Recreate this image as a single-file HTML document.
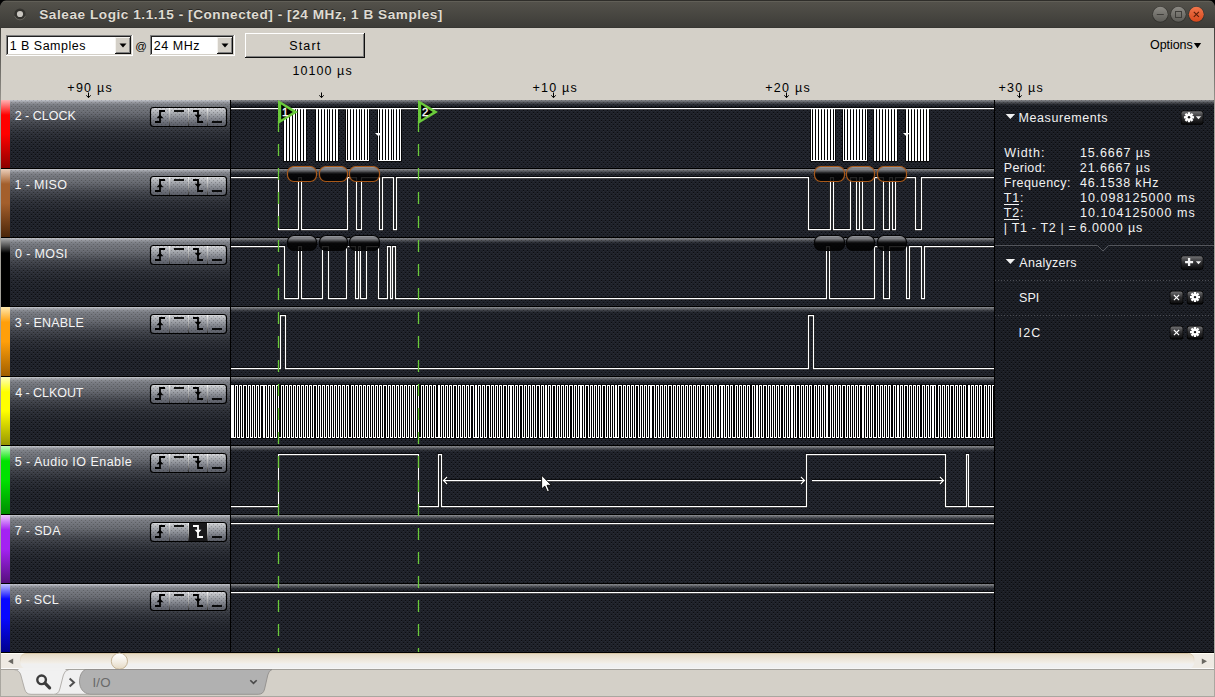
<!DOCTYPE html>
<html><head><meta charset="utf-8"><title>Saleae Logic</title>
<style>html,body{margin:0;padding:0;background:#d4d0c8;overflow:hidden}svg{display:block;font-family:"Liberation Sans", sans-serif;}text{white-space:pre}</style></head><body>
<svg width="1215" height="697" viewBox="0 0 1215 697">
<defs>
<pattern id="dots" width="4" height="4" patternUnits="userSpaceOnUse"><rect x="1" y="0" width="1" height="1" fill="#000" fill-opacity="0.566"/><rect x="3" y="2" width="1" height="1" fill="#000" fill-opacity="0.566"/><rect x="1" y="1" width="1" height="1" fill="#fff" fill-opacity="0.05"/><rect x="3" y="3" width="1" height="1" fill="#fff" fill-opacity="0.05"/></pattern>
<pattern id="dots2" width="4" height="4" patternUnits="userSpaceOnUse"><rect x="1" y="0" width="1" height="1" fill="#000" fill-opacity="0.108"/><rect x="3" y="2" width="1" height="1" fill="#000" fill-opacity="0.108"/></pattern>
<pattern id="dots3" width="4" height="4" patternUnits="userSpaceOnUse"><rect x="1" y="0" width="1" height="1" fill="#000" fill-opacity="0.22"/><rect x="3" y="2" width="1" height="1" fill="#000" fill-opacity="0.22"/></pattern>
<linearGradient id="gTitle" x1="0" y1="0" x2="0" y2="1"><stop offset="0" stop-color="#55534c"/><stop offset="1" stop-color="#3c3b37"/></linearGradient>
<linearGradient id="gLab" x1="0" y1="0" x2="0" y2="1"><stop offset="0" stop-color="#f7f9ff" stop-opacity="0.78"/><stop offset="0.0147" stop-color="#f7f9ff" stop-opacity="0.67"/><stop offset="0.0294" stop-color="#f7f9ff" stop-opacity="0.576"/><stop offset="0.0588" stop-color="#f7f9ff" stop-opacity="0.455"/><stop offset="0.088" stop-color="#f7f9ff" stop-opacity="0.406"/><stop offset="0.191" stop-color="#f7f9ff" stop-opacity="0.34"/><stop offset="0.338" stop-color="#f7f9ff" stop-opacity="0.17"/><stop offset="0.485" stop-color="#f7f9ff" stop-opacity="0.067"/><stop offset="0.632" stop-color="#f7f9ff" stop-opacity="0.018"/><stop offset="0.78" stop-color="#f7f9ff" stop-opacity="0"/></linearGradient>
<linearGradient id="gRidge" x1="0" y1="0" x2="0" y2="1"><stop offset="0.0000" stop-color="#fff" stop-opacity="0.48"/><stop offset="0.1667" stop-color="#fff" stop-opacity="0.39"/><stop offset="0.3333" stop-color="#fff" stop-opacity="0.27"/><stop offset="0.5000" stop-color="#fff" stop-opacity="0.17"/><stop offset="0.6667" stop-color="#fff" stop-opacity="0.09"/><stop offset="0.8333" stop-color="#fff" stop-opacity="0.036"/><stop offset="1.0000" stop-color="#fff" stop-opacity="0"/></linearGradient>
<linearGradient id="gBar0" x1="0" y1="0" x2="0" y2="1"><stop offset="0" stop-color="#ffb4b4"/><stop offset="0.22" stop-color="#ff0000"/><stop offset="0.5" stop-color="#ff0000"/><stop offset="1" stop-color="#8c0000"/></linearGradient>
<linearGradient id="gBar1" x1="0" y1="0" x2="0" y2="1"><stop offset="0" stop-color="#ecd0bc"/><stop offset="0.22" stop-color="#a45f2c"/><stop offset="0.5" stop-color="#a45f2c"/><stop offset="1" stop-color="#4a2508"/></linearGradient>
<linearGradient id="gBar2" x1="0" y1="0" x2="0" y2="1"><stop offset="0" stop-color="#b0b0b0"/><stop offset="0.22" stop-color="#000000"/><stop offset="0.5" stop-color="#000000"/><stop offset="1" stop-color="#000000"/></linearGradient>
<linearGradient id="gBar3" x1="0" y1="0" x2="0" y2="1"><stop offset="0" stop-color="#ffe9b0"/><stop offset="0.22" stop-color="#ff9f0a"/><stop offset="0.5" stop-color="#ff9f0a"/><stop offset="1" stop-color="#a05e00"/></linearGradient>
<linearGradient id="gBar4" x1="0" y1="0" x2="0" y2="1"><stop offset="0" stop-color="#ffffc0"/><stop offset="0.22" stop-color="#ffff00"/><stop offset="0.5" stop-color="#ffff00"/><stop offset="1" stop-color="#969600"/></linearGradient>
<linearGradient id="gBar5" x1="0" y1="0" x2="0" y2="1"><stop offset="0" stop-color="#c4ffc4"/><stop offset="0.22" stop-color="#00e200"/><stop offset="0.5" stop-color="#00e200"/><stop offset="1" stop-color="#008c00"/></linearGradient>
<linearGradient id="gBar6" x1="0" y1="0" x2="0" y2="1"><stop offset="0" stop-color="#f0c8ff"/><stop offset="0.22" stop-color="#a422f2"/><stop offset="0.5" stop-color="#a422f2"/><stop offset="1" stop-color="#55107c"/></linearGradient>
<linearGradient id="gBar7" x1="0" y1="0" x2="0" y2="1"><stop offset="0" stop-color="#c4c4ff"/><stop offset="0.22" stop-color="#0808ff"/><stop offset="0.5" stop-color="#0808ff"/><stop offset="1" stop-color="#00008c"/></linearGradient>
<linearGradient id="gBtn" x1="0" y1="0" x2="0" y2="1"><stop offset="0" stop-color="#dfe0e3"/><stop offset="0.12" stop-color="#c2c4c8"/><stop offset="0.35" stop-color="#a1a4aa"/><stop offset="0.6" stop-color="#81848c"/><stop offset="0.82" stop-color="#676a73"/><stop offset="1" stop-color="#5a5d66"/></linearGradient>
<linearGradient id="gDiv" x1="0" y1="0" x2="0" y2="1"><stop offset="0" stop-color="#ffffff"/><stop offset="0.15" stop-color="#d8d8d8"/><stop offset="0.6" stop-color="#9a9a9a"/><stop offset="1" stop-color="#2a2a2a"/></linearGradient>
<linearGradient id="gPill" x1="0" y1="0" x2="0" y2="1"><stop offset="0" stop-color="#a9abb0"/><stop offset="0.08" stop-color="#a2a4a9"/><stop offset="0.2" stop-color="#7f8084"/><stop offset="0.33" stop-color="#505153"/><stop offset="0.43" stop-color="#1b1b1c"/><stop offset="0.52" stop-color="#030303"/><stop offset="1" stop-color="#000"/></linearGradient>
<linearGradient id="gDark" x1="0" y1="0" x2="0" y2="1"><stop offset="0" stop-color="#727274"/><stop offset="0.45" stop-color="#333335"/><stop offset="1" stop-color="#0a0a0b"/></linearGradient>
<linearGradient id="gScroll" x1="0" y1="0" x2="0" y2="1"><stop offset="0" stop-color="#e4d8c2"/><stop offset="0.3" stop-color="#ebe3d5"/><stop offset="0.62" stop-color="#f2eee7"/><stop offset="0.7" stop-color="#f0f0f0"/><stop offset="1" stop-color="#f0f0f0"/></linearGradient>
<linearGradient id="gTrackS" x1="0" y1="0" x2="0" y2="1"><stop offset="0" stop-color="#d6c5a4"/><stop offset="0.45" stop-color="#e6dccb" stop-opacity="0.6"/><stop offset="0.7" stop-color="#f0f0f0" stop-opacity="0"/><stop offset="1" stop-color="#f0f0f0" stop-opacity="0"/></linearGradient>
<linearGradient id="gThumb" x1="0" y1="0" x2="0" y2="1"><stop offset="0" stop-color="#ffffff"/><stop offset="0.5" stop-color="#f4efe6"/><stop offset="1" stop-color="#e4d8c2"/></linearGradient>
<linearGradient id="gGray" x1="0" y1="0" x2="0" y2="1"><stop offset="0" stop-color="#8c8a84"/><stop offset="1" stop-color="#5d5c57"/></linearGradient>
<linearGradient id="gOrange" x1="0" y1="0" x2="0" y2="1"><stop offset="0" stop-color="#f0764c"/><stop offset="1" stop-color="#d8481c"/></linearGradient>
<linearGradient id="gEdge" x1="0" y1="28" x2="0" y2="697" gradientUnits="userSpaceOnUse"><stop offset="0" stop-color="#3f3e3a"/><stop offset="0.06" stop-color="#6e6c67"/><stop offset="0.12" stop-color="#a19e97"/><stop offset="1" stop-color="#aaa7a0"/></linearGradient>
<clipPath id="clipWave"><rect x="231" y="100" width="763" height="552"/></clipPath>
</defs>
<rect x="0" y="0" width="1215" height="697" fill="#d4d0c8" />
<rect x="0" y="0" width="1215" height="28" fill="url(#gTitle)" />
<rect x="0" y="0" width="1215" height="1" fill="#2f2e2a" />
<rect x="0" y="1" width="1215" height="1" fill="#615f57" />
<rect x="0" y="27" width="1215" height="1" fill="#383733" />
<path d="M0 0H6Q1.5 1 0 6Z" fill="#000"/>
<path d="M1215 0H1209Q1213.5 1 1215 6Z" fill="#000"/>
<circle cx="20" cy="14" r="5.6" fill="#33322e"/>
<path d="M14.6 16.2A5.8 5.8 0 0 0 25.4 16.2" fill="none" stroke="#6b6962" stroke-width="0.9"/>
<circle cx="20" cy="14" r="3.1" fill="#c9c6c0"/>
<text x="39.23" y="18" font-size="13.6" fill="#2a2926" textLength="403.16" lengthAdjust="spacing" font-weight="bold" >Saleae Logic 1.1.15 - [Connected] - [24 MHz, 1 B Samples]</text>
<text x="39.23" y="19" font-size="13.6" fill="#dfdbd2" textLength="403.16" lengthAdjust="spacing" font-weight="bold" >Saleae Logic 1.1.15 - [Connected] - [24 MHz, 1 B Samples]</text>
<circle cx="1160.3" cy="14.6" r="8.1" fill="#33322e"/>
<circle cx="1160.3" cy="14.3" r="7.45" fill="url(#gGray)"/>
<circle cx="1178.3" cy="14.6" r="8.1" fill="#33322e"/>
<circle cx="1178.3" cy="14.3" r="7.45" fill="url(#gGray)"/>
<circle cx="1196.3" cy="14.6" r="8.1" fill="#33322e"/>
<circle cx="1196.3" cy="14.3" r="7.45" fill="url(#gOrange)"/>
<path d="M1156.8 14.5H1163.8" stroke="#3f3e3a" stroke-width="1"/>
<rect x="1175.5" y="11.5" width="6" height="6" fill="none" stroke="#3f3e3a" stroke-width="1"/>
<path d="M1193.8 11.8L1198.9 16.9M1198.9 11.8L1193.8 16.9" stroke="#5a1d08" stroke-width="1.1"/>
<rect x="0" y="28" width="1" height="669" fill="url(#gEdge)" />
<rect x="1214" y="28" width="1" height="669" fill="url(#gEdge)" />
<rect x="0" y="696" width="1215" height="1" fill="#aaa7a0" />
<rect x="6" y="35" width="127" height="21" fill="#ffffff" />
<rect x="6" y="35" width="126" height="1" fill="#808080" />
<rect x="6" y="35" width="1" height="20" fill="#808080" />
<rect x="7" y="36" width="125" height="19" fill="#d4d0c8" />
<rect x="7" y="36" width="124" height="1" fill="#202020" />
<rect x="7" y="36" width="1" height="18" fill="#202020" />
<rect x="8" y="37" width="123" height="17" fill="#ffffff" />
<rect x="115" y="37" width="16" height="17" fill="#101010" />
<rect x="115" y="37" width="15" height="16" fill="#f4f2ee" />
<rect x="116" y="38" width="14" height="15" fill="#808080" />
<rect x="116" y="38" width="13" height="14" fill="#d4d0c8" />
<path d="M119.5 43.4H126.5L123.0 47.4Z" fill="#000"/>
<text x="9.63" y="50" font-size="12.5" fill="#000" textLength="75.76" lengthAdjust="spacing" >1 B Samples</text>
<text x="135.20" y="49.6" font-size="11.4" fill="#000" >@</text>
<rect x="150" y="35" width="85" height="21" fill="#ffffff" />
<rect x="150" y="35" width="84" height="1" fill="#808080" />
<rect x="150" y="35" width="1" height="20" fill="#808080" />
<rect x="151" y="36" width="83" height="19" fill="#d4d0c8" />
<rect x="151" y="36" width="82" height="1" fill="#202020" />
<rect x="151" y="36" width="1" height="18" fill="#202020" />
<rect x="152" y="37" width="81" height="17" fill="#ffffff" />
<rect x="217" y="37" width="16" height="17" fill="#101010" />
<rect x="217" y="37" width="15" height="16" fill="#f4f2ee" />
<rect x="218" y="38" width="14" height="15" fill="#808080" />
<rect x="218" y="38" width="13" height="14" fill="#d4d0c8" />
<path d="M221.5 43.4H228.5L225.0 47.4Z" fill="#000"/>
<text x="153.77" y="50" font-size="12.5" fill="#000" textLength="45.65" lengthAdjust="spacing" >24 MHz</text>
<rect x="245" y="33" width="120" height="25" fill="#101010" />
<rect x="245" y="33" width="119" height="24" fill="#ffffff" />
<rect x="246" y="34" width="118" height="23" fill="#808080" />
<rect x="246" y="34" width="117" height="22" fill="#d4d0c8" />
<text x="289.34" y="50" font-size="12.5" fill="#000" textLength="30.80" lengthAdjust="spacing" >Start</text>
<text x="1149.97" y="49" font-size="12.5" fill="#000" textLength="42.67" lengthAdjust="spacing" >Options</text>
<path d="M1193.9 43H1201.1L1197.5 48.2Z" fill="#000"/>
<text x="292.50" y="75" font-size="12.5" fill="#000" textLength="59.14" lengthAdjust="spacing" >10100 µs</text>
<text x="67.34" y="92" font-size="12.5" fill="#000" textLength="44.34" lengthAdjust="spacing" >+90 µs</text>
<text x="532.57" y="92" font-size="12.5" fill="#000" textLength="44.12" lengthAdjust="spacing" >+10 µs</text>
<text x="765.24" y="92" font-size="12.5" fill="#000" textLength="44.39" lengthAdjust="spacing" >+20 µs</text>
<text x="998.43" y="92" font-size="12.5" fill="#000" textLength="44.30" lengthAdjust="spacing" >+30 µs</text>
<path d="M88.5 92.5V97.5M86.3 95.3L88.5 97.7L90.7 95.3" stroke="#000" stroke-width="1" fill="none"/>
<path d="M321.5 92.5V97.5M319.3 95.3L321.5 97.7L323.7 95.3" stroke="#000" stroke-width="1" fill="none"/>
<path d="M553.5 92.5V97.5M551.3 95.3L553.5 97.7L555.7 95.3" stroke="#000" stroke-width="1" fill="none"/>
<path d="M786.5 92.5V97.5M784.3 95.3L786.5 97.7L788.7 95.3" stroke="#000" stroke-width="1" fill="none"/>
<path d="M1019.5 92.5V97.5M1017.3 95.3L1019.5 97.7L1021.7 95.3" stroke="#000" stroke-width="1" fill="none"/>
<rect x="1" y="100" width="1213" height="553" fill="#000" />
<rect x="1" y="100" width="229" height="68" fill="#1f222a" />
<rect x="231" y="100" width="763" height="68" fill="#1f222a" />
<rect x="1" y="169" width="229" height="68" fill="#1f222a" />
<rect x="231" y="169" width="763" height="68" fill="#1f222a" />
<rect x="1" y="238" width="229" height="68" fill="#1f222a" />
<rect x="231" y="238" width="763" height="68" fill="#1f222a" />
<rect x="1" y="307" width="229" height="69" fill="#1f222a" />
<rect x="231" y="307" width="763" height="69" fill="#1f222a" />
<rect x="1" y="377" width="229" height="68" fill="#1f222a" />
<rect x="231" y="377" width="763" height="68" fill="#1f222a" />
<rect x="1" y="446" width="229" height="68" fill="#1f222a" />
<rect x="231" y="446" width="763" height="68" fill="#1f222a" />
<rect x="1" y="515" width="229" height="68" fill="#1f222a" />
<rect x="231" y="515" width="763" height="68" fill="#1f222a" />
<rect x="1" y="584" width="229" height="68" fill="#1f222a" />
<rect x="231" y="584" width="763" height="68" fill="#1f222a" />
<rect x="995" y="100" width="219" height="552" fill="#1b1e25" />
<rect x="1" y="100" width="1213" height="552" fill="url(#dots)" />
<rect x="1" y="100" width="229" height="68" fill="url(#gLab)" />
<rect x="231" y="100" width="763" height="6" fill="url(#gRidge)" />
<rect x="1" y="169" width="229" height="68" fill="url(#gLab)" />
<rect x="231" y="169" width="763" height="6" fill="url(#gRidge)" />
<rect x="1" y="238" width="229" height="68" fill="url(#gLab)" />
<rect x="231" y="238" width="763" height="6" fill="url(#gRidge)" />
<rect x="1" y="307" width="229" height="69" fill="url(#gLab)" />
<rect x="231" y="307" width="763" height="6" fill="url(#gRidge)" />
<rect x="1" y="377" width="229" height="68" fill="url(#gLab)" />
<rect x="231" y="377" width="763" height="6" fill="url(#gRidge)" />
<rect x="1" y="446" width="229" height="68" fill="url(#gLab)" />
<rect x="231" y="446" width="763" height="6" fill="url(#gRidge)" />
<rect x="1" y="515" width="229" height="68" fill="url(#gLab)" />
<rect x="231" y="515" width="763" height="6" fill="url(#gRidge)" />
<rect x="1" y="584" width="229" height="68" fill="url(#gLab)" />
<rect x="231" y="584" width="763" height="6" fill="url(#gRidge)" />
<rect x="995" y="100" width="219" height="6" fill="url(#gRidge)" />
<rect x="1" y="100" width="1213" height="552" fill="url(#dots2)" />
<rect x="1" y="168" width="993" height="1" fill="#000" />
<rect x="1" y="237" width="993" height="1" fill="#000" />
<rect x="1" y="306" width="993" height="1" fill="#000" />
<rect x="1" y="376" width="993" height="1" fill="#000" />
<rect x="1" y="445" width="993" height="1" fill="#000" />
<rect x="1" y="514" width="993" height="1" fill="#000" />
<rect x="1" y="583" width="993" height="1" fill="#000" />
<rect x="1" y="652" width="993" height="1" fill="#000" />
<rect x="230" y="100" width="1" height="552" fill="#000" />
<rect x="994" y="100" width="1" height="553" fill="#000" />
<rect x="1" y="652" width="1213" height="1" fill="#000" />
<rect x="1" y="100" width="9" height="68" fill="url(#gBar0)" />
<text x="14.66" y="120" font-size="12.5" fill="#f4f4f4" textLength="61.16" lengthAdjust="spacing" >2 - CLOCK</text>
<rect x="150.5" y="107.5" width="76" height="19" rx="3" ry="3" fill="url(#gBtn)" stroke="#000" stroke-width="1.15"/>
<rect x="151" y="108" width="75" height="18" rx="2.5" fill="url(#dots3)"/>
<rect x="169" y="108" width="1" height="18" fill="url(#gDiv)"/>
<rect x="188" y="108" width="1" height="18" fill="url(#gDiv)"/>
<rect x="207" y="108" width="1" height="18" fill="url(#gDiv)"/>
<path d="M155 122H160V111H165" fill="none" stroke="#000000" stroke-width="1.8"/>
<path d="M156.5 118.3L160 114.6L163.5 118.3Z" fill="#000000"/>
<path d="M174 111H184" stroke="#000000" stroke-width="1.8"/>
<path d="M193 111H198V122H203" fill="none" stroke="#000000" stroke-width="1.8"/>
<path d="M194.5 114.7L198 118.4L201.5 114.7Z" fill="#000000"/>
<path d="M212 122H222" stroke="#000000" stroke-width="1.8"/>
<rect x="1" y="169" width="9" height="68" fill="url(#gBar1)" />
<text x="14.49" y="189" font-size="12.5" fill="#f4f4f4" textLength="52.55" lengthAdjust="spacing" >1 - MISO</text>
<rect x="150.5" y="176.5" width="76" height="19" rx="3" ry="3" fill="url(#gBtn)" stroke="#000" stroke-width="1.15"/>
<rect x="151" y="177" width="75" height="18" rx="2.5" fill="url(#dots3)"/>
<rect x="169" y="177" width="1" height="18" fill="url(#gDiv)"/>
<rect x="188" y="177" width="1" height="18" fill="url(#gDiv)"/>
<rect x="207" y="177" width="1" height="18" fill="url(#gDiv)"/>
<path d="M155 191H160V180H165" fill="none" stroke="#000000" stroke-width="1.8"/>
<path d="M156.5 187.3L160 183.6L163.5 187.3Z" fill="#000000"/>
<path d="M174 180H184" stroke="#000000" stroke-width="1.8"/>
<path d="M193 180H198V191H203" fill="none" stroke="#000000" stroke-width="1.8"/>
<path d="M194.5 183.7L198 187.4L201.5 183.7Z" fill="#000000"/>
<path d="M212 191H222" stroke="#000000" stroke-width="1.8"/>
<rect x="1" y="238" width="9" height="68" fill="url(#gBar2)" />
<text x="15.07" y="258" font-size="12.5" fill="#f4f4f4" textLength="52.52" lengthAdjust="spacing" >0 - MOSI</text>
<rect x="150.5" y="245.5" width="76" height="19" rx="3" ry="3" fill="url(#gBtn)" stroke="#000" stroke-width="1.15"/>
<rect x="151" y="246" width="75" height="18" rx="2.5" fill="url(#dots3)"/>
<rect x="169" y="246" width="1" height="18" fill="url(#gDiv)"/>
<rect x="188" y="246" width="1" height="18" fill="url(#gDiv)"/>
<rect x="207" y="246" width="1" height="18" fill="url(#gDiv)"/>
<path d="M155 260H160V249H165" fill="none" stroke="#000000" stroke-width="1.8"/>
<path d="M156.5 256.3L160 252.6L163.5 256.3Z" fill="#000000"/>
<path d="M174 249H184" stroke="#000000" stroke-width="1.8"/>
<path d="M193 249H198V260H203" fill="none" stroke="#000000" stroke-width="1.8"/>
<path d="M194.5 252.7L198 256.4L201.5 252.7Z" fill="#000000"/>
<path d="M212 260H222" stroke="#000000" stroke-width="1.8"/>
<rect x="1" y="307" width="9" height="69" fill="url(#gBar3)" />
<text x="14.75" y="327" font-size="12.5" fill="#f4f4f4" textLength="69.07" lengthAdjust="spacing" >3 - ENABLE</text>
<rect x="150.5" y="314.5" width="76" height="19" rx="3" ry="3" fill="url(#gBtn)" stroke="#000" stroke-width="1.15"/>
<rect x="151" y="315" width="75" height="18" rx="2.5" fill="url(#dots3)"/>
<rect x="169" y="315" width="1" height="18" fill="url(#gDiv)"/>
<rect x="188" y="315" width="1" height="18" fill="url(#gDiv)"/>
<rect x="207" y="315" width="1" height="18" fill="url(#gDiv)"/>
<path d="M155 329H160V318H165" fill="none" stroke="#000000" stroke-width="1.8"/>
<path d="M156.5 325.3L160 321.6L163.5 325.3Z" fill="#000000"/>
<path d="M174 318H184" stroke="#000000" stroke-width="1.8"/>
<path d="M193 318H198V329H203" fill="none" stroke="#000000" stroke-width="1.8"/>
<path d="M194.5 321.7L198 325.4L201.5 321.7Z" fill="#000000"/>
<path d="M212 329H222" stroke="#000000" stroke-width="1.8"/>
<rect x="1" y="377" width="9" height="68" fill="url(#gBar4)" />
<text x="15.21" y="397" font-size="12.5" fill="#f4f4f4" textLength="68.28" lengthAdjust="spacing" >4 - CLKOUT</text>
<rect x="150.5" y="384.5" width="76" height="19" rx="3" ry="3" fill="url(#gBtn)" stroke="#000" stroke-width="1.15"/>
<rect x="151" y="385" width="75" height="18" rx="2.5" fill="url(#dots3)"/>
<rect x="169" y="385" width="1" height="18" fill="url(#gDiv)"/>
<rect x="188" y="385" width="1" height="18" fill="url(#gDiv)"/>
<rect x="207" y="385" width="1" height="18" fill="url(#gDiv)"/>
<path d="M155 399H160V388H165" fill="none" stroke="#000000" stroke-width="1.8"/>
<path d="M156.5 395.3L160 391.6L163.5 395.3Z" fill="#000000"/>
<path d="M174 388H184" stroke="#000000" stroke-width="1.8"/>
<path d="M193 388H198V399H203" fill="none" stroke="#000000" stroke-width="1.8"/>
<path d="M194.5 391.7L198 395.4L201.5 391.7Z" fill="#000000"/>
<path d="M212 399H222" stroke="#000000" stroke-width="1.8"/>
<rect x="1" y="446" width="9" height="68" fill="url(#gBar5)" />
<text x="14.69" y="466" font-size="12.5" fill="#f4f4f4" textLength="117.07" lengthAdjust="spacing" >5 - Audio IO Enable</text>
<rect x="150.5" y="453.5" width="76" height="19" rx="3" ry="3" fill="url(#gBtn)" stroke="#000" stroke-width="1.15"/>
<rect x="151" y="454" width="75" height="18" rx="2.5" fill="url(#dots3)"/>
<rect x="169" y="454" width="1" height="18" fill="url(#gDiv)"/>
<rect x="188" y="454" width="1" height="18" fill="url(#gDiv)"/>
<rect x="207" y="454" width="1" height="18" fill="url(#gDiv)"/>
<path d="M155 468H160V457H165" fill="none" stroke="#000000" stroke-width="1.8"/>
<path d="M156.5 464.3L160 460.6L163.5 464.3Z" fill="#000000"/>
<path d="M174 457H184" stroke="#000000" stroke-width="1.8"/>
<path d="M193 457H198V468H203" fill="none" stroke="#000000" stroke-width="1.8"/>
<path d="M194.5 460.7L198 464.4L201.5 460.7Z" fill="#000000"/>
<path d="M212 468H222" stroke="#000000" stroke-width="1.8"/>
<rect x="1" y="515" width="9" height="68" fill="url(#gBar6)" />
<text x="14.66" y="535" font-size="12.5" fill="#f4f4f4" textLength="45.89" lengthAdjust="spacing" >7 - SDA</text>
<rect x="150.5" y="522.5" width="76" height="19" rx="3" ry="3" fill="url(#gBtn)" stroke="#000" stroke-width="1.15"/>
<rect x="151" y="523" width="75" height="18" rx="2.5" fill="url(#dots3)"/>
<rect x="189" y="523" width="19" height="18" fill="#19191b"/>
<rect x="169" y="523" width="1" height="18" fill="url(#gDiv)"/>
<rect x="188" y="523" width="1" height="18" fill="url(#gDiv)"/>
<rect x="207" y="523" width="1" height="18" fill="url(#gDiv)"/>
<path d="M155 537H160V526H165" fill="none" stroke="#000000" stroke-width="1.8"/>
<path d="M156.5 533.3L160 529.6L163.5 533.3Z" fill="#000000"/>
<path d="M174 526H184" stroke="#000000" stroke-width="1.8"/>
<path d="M193 526H198V537H203" fill="none" stroke="#ffffff" stroke-width="1.8"/>
<path d="M194.5 529.7L198 533.4L201.5 529.7Z" fill="#ffffff"/>
<path d="M212 537H222" stroke="#000000" stroke-width="1.8"/>
<rect x="1" y="584" width="9" height="68" fill="url(#gBar7)" />
<text x="14.86" y="604" font-size="12.5" fill="#f4f4f4" textLength="43.78" lengthAdjust="spacing" >6 - SCL</text>
<rect x="150.5" y="591.5" width="76" height="19" rx="3" ry="3" fill="url(#gBtn)" stroke="#000" stroke-width="1.15"/>
<rect x="151" y="592" width="75" height="18" rx="2.5" fill="url(#dots3)"/>
<rect x="169" y="592" width="1" height="18" fill="url(#gDiv)"/>
<rect x="188" y="592" width="1" height="18" fill="url(#gDiv)"/>
<rect x="207" y="592" width="1" height="18" fill="url(#gDiv)"/>
<path d="M155 606H160V595H165" fill="none" stroke="#000000" stroke-width="1.8"/>
<path d="M156.5 602.3L160 598.6L163.5 602.3Z" fill="#000000"/>
<path d="M174 595H184" stroke="#000000" stroke-width="1.8"/>
<path d="M193 595H198V606H203" fill="none" stroke="#000000" stroke-width="1.8"/>
<path d="M194.5 598.7L198 602.4L201.5 598.7Z" fill="#000000"/>
<path d="M212 606H222" stroke="#000000" stroke-width="1.8"/>
<g clip-path="url(#clipWave)">
<g fill="none" stroke="#000" stroke-opacity="0.8" stroke-width="2.7" stroke-linejoin="miter">
<path d="M231 108.5H994"/>
<path d="M231 177.5H278.5V229.5H298.5V177.5H301.5V229.5H347.5V177.5H356.5V229.5H361.5V177.5H379.5V229.5H382.5V177.5H393.5V229.5H396.5V177.5H808.5V229.5H830.5V177.5H833.5V229.5H850.5V177.5H856.5V229.5H859.5V177.5H862.5V229.5H874.5V177.5H883.5V229.5H889.5V177.5H892.5V229.5H895.5V177.5H915.5V229.5H921.5V177.5H994"/>
<path d="M231 246.5H284.5V298.5H298.5V246.5H301.5V298.5H322.5V246.5H328.5V298.5H346.5V246.5H355.5V298.5H358.5V246.5H360.5V298.5H366.5V246.5H378.5V298.5H387.5V246.5H390.5V298.5H392.5V246.5H395.5V298.5H826.5V246.5H829.5V298.5H874.5V246.5H883.5V298.5H889.5V246.5H906.5V298.5H909.5V246.5H921.5V298.5H924.5V246.5H994"/>
<path d="M231 368.5H280.5V315.5H285.5V368.5H808.5V315.5H813.5V368.5H994"/>
<path d="M231 506.5H278.5V454.5H418.5V506.5H438.5V454.5H441.5V506.5H806.5V454.5H945.5V506.5H966.5V454.5H968.5V506.5H994"/>
<path d="M231 523.5H994M231 592.5H994"/>
<path d="M443.5 480.5H804.5M447.1 476.9L443.5 480.5L447.1 484.1M800.9 476.9L804.5 480.5L800.9 484.1"/>
<path d="M812 480.5H943.5M939.9 476.9L943.5 480.5L939.9 484.1"/>
</g>
<g fill="#000" fill-opacity="0.9">
<rect x="283.2" y="108" width="23.6" height="53.8"/>
<rect x="315.2" y="108" width="23.6" height="53.8"/>
<rect x="873.2" y="108" width="24.6" height="53.8"/>
<rect x="905.2" y="108" width="24.6" height="53.8"/>
<rect x="345.2" y="108" width="24.6" height="53.8"/>
<rect x="377.2" y="108" width="24.6" height="53.8"/>
<rect x="810.2" y="108" width="25.6" height="53.8"/>
<rect x="842.2" y="108" width="25.6" height="53.8"/>
<rect x="231" y="384.2" width="763" height="54.6"/>
</g>
<g fill="#fff" shape-rendering="crispEdges">
<rect x="284" y="108" width="2" height="53"/>
<rect x="287" y="108" width="2" height="53"/>
<rect x="290" y="108" width="2" height="53"/>
<rect x="293" y="108" width="2" height="53"/>
<rect x="296" y="108" width="1" height="53"/>
<rect x="298" y="108" width="2" height="53"/>
<rect x="301" y="108" width="2" height="53"/>
<rect x="304" y="108" width="2" height="53"/>
<rect x="316" y="108" width="2" height="53"/>
<rect x="319" y="108" width="2" height="53"/>
<rect x="322" y="108" width="2" height="53"/>
<rect x="325" y="108" width="2" height="53"/>
<rect x="328" y="108" width="1" height="53"/>
<rect x="330" y="108" width="2" height="53"/>
<rect x="333" y="108" width="2" height="53"/>
<rect x="336" y="108" width="2" height="53"/>
<rect x="874" y="108" width="2" height="53"/>
<rect x="877" y="108" width="2" height="53"/>
<rect x="880" y="108" width="2" height="53"/>
<rect x="883" y="108" width="2" height="53"/>
<rect x="886" y="108" width="2" height="53"/>
<rect x="889" y="108" width="2" height="53"/>
<rect x="892" y="108" width="2" height="53"/>
<rect x="895" y="108" width="2" height="53"/>
<rect x="906" y="108" width="2" height="53"/>
<rect x="909" y="108" width="2" height="53"/>
<rect x="912" y="108" width="2" height="53"/>
<rect x="915" y="108" width="2" height="53"/>
<rect x="918" y="108" width="2" height="53"/>
<rect x="921" y="108" width="2" height="53"/>
<rect x="924" y="108" width="2" height="53"/>
<rect x="927" y="108" width="2" height="53"/>
<rect x="346" y="108" width="1" height="53"/>
<rect x="348" y="108" width="2" height="53"/>
<rect x="351" y="108" width="2" height="53"/>
<rect x="354" y="108" width="2" height="53"/>
<rect x="357" y="108" width="2" height="53"/>
<rect x="360" y="108" width="1" height="53"/>
<rect x="362" y="108" width="2" height="53"/>
<rect x="365" y="108" width="2" height="53"/>
<rect x="368" y="108" width="1" height="53"/>
<rect x="378" y="108" width="1" height="53"/>
<rect x="380" y="108" width="2" height="53"/>
<rect x="383" y="108" width="2" height="53"/>
<rect x="386" y="108" width="2" height="53"/>
<rect x="389" y="108" width="2" height="53"/>
<rect x="392" y="108" width="1" height="53"/>
<rect x="394" y="108" width="2" height="53"/>
<rect x="397" y="108" width="2" height="53"/>
<rect x="400" y="108" width="1" height="53"/>
<rect x="811" y="108" width="1" height="53"/>
<rect x="813" y="108" width="2" height="53"/>
<rect x="816" y="108" width="2" height="53"/>
<rect x="819" y="108" width="2" height="53"/>
<rect x="822" y="108" width="2" height="53"/>
<rect x="825" y="108" width="2" height="53"/>
<rect x="828" y="108" width="2" height="53"/>
<rect x="831" y="108" width="2" height="53"/>
<rect x="834" y="108" width="1" height="53"/>
<rect x="843" y="108" width="1" height="53"/>
<rect x="845" y="108" width="2" height="53"/>
<rect x="848" y="108" width="2" height="53"/>
<rect x="851" y="108" width="2" height="53"/>
<rect x="854" y="108" width="2" height="53"/>
<rect x="857" y="108" width="2" height="53"/>
<rect x="860" y="108" width="2" height="53"/>
<rect x="863" y="108" width="2" height="53"/>
<rect x="866" y="108" width="1" height="53"/>
<rect x="346" y="160" width="23" height="1"/>
<rect x="378" y="160" width="23" height="1"/>
<rect x="811" y="160" width="24" height="1"/>
<rect x="843" y="160" width="24" height="1"/>
</g>
<path d="M375 133H381.5L378.6 136.6Z" fill="#fff"/><path d="M903 133H909.5L906.6 136.6Z" fill="#fff"/>
<g fill="none" stroke="#fff" stroke-width="1.25">
<path d="M231 108.5H994"/>
<path d="M231 177.5H278.5V229.5H298.5V177.5H301.5V229.5H347.5V177.5H356.5V229.5H361.5V177.5H379.5V229.5H382.5V177.5H393.5V229.5H396.5V177.5H808.5V229.5H830.5V177.5H833.5V229.5H850.5V177.5H856.5V229.5H859.5V177.5H862.5V229.5H874.5V177.5H883.5V229.5H889.5V177.5H892.5V229.5H895.5V177.5H915.5V229.5H921.5V177.5H994"/>
<path d="M231 246.5H284.5V298.5H298.5V246.5H301.5V298.5H322.5V246.5H328.5V298.5H346.5V246.5H355.5V298.5H358.5V246.5H360.5V298.5H366.5V246.5H378.5V298.5H387.5V246.5H390.5V298.5H392.5V246.5H395.5V298.5H826.5V246.5H829.5V298.5H874.5V246.5H883.5V298.5H889.5V246.5H906.5V298.5H909.5V246.5H921.5V298.5H924.5V246.5H994"/>
<path d="M231 368.5H280.5V315.5H285.5V368.5H808.5V315.5H813.5V368.5H994"/>
<path d="M231 506.5H278.5V454.5H418.5V506.5H438.5V454.5H441.5V506.5H806.5V454.5H945.5V506.5H966.5V454.5H968.5V506.5H994"/>
<path d="M231 523.5H994M231 592.5H994"/>
<path d="M443.5 480.5H804.5M447.1 476.9L443.5 480.5L447.1 484.1M800.9 476.9L804.5 480.5L800.9 484.1"/>
<path d="M812 480.5H943.5M939.9 476.9L943.5 480.5L939.9 484.1"/>
</g>
<g fill="none" stroke="#fff" stroke-width="1" shape-rendering="crispEdges">
<path d="M231 437.5H231.5V385.5H233.5V437.5H235.5V385.5H237.5V437.5H239.5V385.5H241.5V437.5H243.5V385.5H246.5V437.5H248.5V385.5H250.5V437.5H252.5V385.5H254.5V437.5H256.5V385.5H258.5V437.5H260.5V385.5H263.5V437.5H264.5V385.5H266.5V437.5H268.5V385.5H270.5V437.5H272.5V385.5H274.5V437.5H276.5V385.5H278.5V437.5H281.5V385.5H283.5V437.5H285.5V385.5H287.5V437.5H289.5V385.5H291.5V437.5H293.5V385.5H295.5V437.5H297.5V385.5H299.5V437.5H301.5V385.5H303.5V437.5H305.5V385.5H307.5V437.5H309.5V385.5H311.5V437.5H313.5V385.5H316.5V437.5H318.5V385.5H320.5V437.5H322.5V385.5H324.5V437.5H326.5V385.5H328.5V437.5H330.5V385.5H332.5V437.5H334.5V385.5H336.5V437.5H338.5V385.5H340.5V437.5H342.5V385.5H344.5V437.5H346.5V385.5H348.5V437.5H351.5V385.5H353.5V437.5H355.5V385.5H357.5V437.5H359.5V385.5H361.5V437.5H363.5V385.5H365.5V437.5H367.5V385.5H369.5V437.5H371.5V385.5H373.5V437.5H375.5V385.5H377.5V437.5H379.5V385.5H381.5V437.5H383.5V385.5H386.5V437.5H388.5V385.5H390.5V437.5H392.5V385.5H394.5V437.5H396.5V385.5H398.5V437.5H400.5V385.5H402.5V437.5H404.5V385.5H406.5V437.5H408.5V385.5H410.5V437.5H412.5V385.5H414.5V437.5H416.5V385.5H418.5V437.5H421.5V385.5H423.5V437.5H425.5V385.5H427.5V437.5H429.5V385.5H431.5V437.5H433.5V385.5H435.5V437.5H438.5V385.5H439.5V437.5H441.5V385.5H443.5V437.5H445.5V385.5H447.5V437.5H449.5V385.5H451.5V437.5H453.5V385.5H456.5V437.5H458.5V385.5H460.5V437.5H462.5V385.5H464.5V437.5H466.5V385.5H468.5V437.5H470.5V385.5H473.5V437.5H475.5V385.5H476.5V437.5H478.5V385.5H480.5V437.5H482.5V385.5H484.5V437.5H486.5V385.5H489.5V437.5H491.5V385.5H493.5V437.5H495.5V385.5H497.5V437.5H499.5V385.5H501.5V437.5H503.5V385.5H506.5V437.5H508.5V385.5H510.5V437.5H511.5V385.5H513.5V437.5H515.5V385.5H517.5V437.5H519.5V385.5H522.5V437.5H524.5V385.5H526.5V437.5H528.5V385.5H530.5V437.5H532.5V385.5H534.5V437.5H536.5V385.5H539.5V437.5H541.5V385.5H543.5V437.5H545.5V385.5H546.5V437.5H548.5V385.5H550.5V437.5H552.5V385.5H555.5V437.5H557.5V385.5H559.5V437.5H561.5V385.5H563.5V437.5H565.5V385.5H567.5V437.5H569.5V385.5H572.5V437.5H574.5V385.5H576.5V437.5H578.5V385.5H580.5V437.5H581.5V385.5H583.5V437.5H585.5V385.5H588.5V437.5H590.5V385.5H592.5V437.5H594.5V385.5H596.5V437.5H598.5V385.5H600.5V437.5H602.5V385.5H605.5V437.5H607.5V385.5H609.5V437.5H611.5V385.5H613.5V437.5H615.5V385.5H616.5V437.5H618.5V385.5H621.5V437.5H623.5V385.5H625.5V437.5H627.5V385.5H629.5V437.5H631.5V385.5H633.5V437.5H635.5V385.5H638.5V437.5H640.5V385.5H642.5V437.5H644.5V385.5H646.5V437.5H648.5V385.5H650.5V437.5H651.5V385.5H654.5V437.5H656.5V385.5H658.5V437.5H660.5V385.5H662.5V437.5H664.5V385.5H666.5V437.5H668.5V385.5H671.5V437.5H673.5V385.5H675.5V437.5H677.5V385.5H679.5V437.5H681.5V385.5H683.5V437.5H685.5V385.5H687.5V437.5H689.5V385.5H691.5V437.5H693.5V385.5H695.5V437.5H697.5V385.5H699.5V437.5H701.5V385.5H704.5V437.5H706.5V385.5H708.5V437.5H710.5V385.5H712.5V437.5H714.5V385.5H716.5V437.5H719.5V385.5H721.5V437.5H722.5V385.5H724.5V437.5H726.5V385.5H728.5V437.5H730.5V385.5H732.5V437.5H735.5V385.5H737.5V437.5H739.5V385.5H741.5V437.5H743.5V385.5H745.5V437.5H747.5V385.5H749.5V437.5H752.5V385.5H754.5V437.5H756.5V385.5H757.5V437.5H759.5V385.5H761.5V437.5H763.5V385.5H766.5V437.5H768.5V385.5H770.5V437.5H772.5V385.5H774.5V437.5H776.5V385.5H778.5V437.5H780.5V385.5H783.5V437.5H785.5V385.5H787.5V437.5H789.5V385.5H791.5V437.5H792.5V385.5H794.5V437.5H796.5V385.5H799.5V437.5H801.5V385.5H803.5V437.5H805.5V385.5H807.5V437.5H809.5V385.5H811.5V437.5H814.5V385.5H816.5V437.5H818.5V385.5H820.5V437.5H822.5V385.5H824.5V437.5H826.5V385.5H827.5V437.5H830.5V385.5H832.5V437.5H834.5V385.5H836.5V437.5H838.5V385.5H840.5V437.5H842.5V385.5H845.5V437.5H847.5V385.5H849.5V437.5H851.5V385.5H853.5V437.5H855.5V385.5H857.5V437.5H859.5V385.5H862.5V437.5H863.5V385.5H865.5V437.5H867.5V385.5H869.5V437.5H871.5V385.5H873.5V437.5H876.5V385.5H878.5V437.5H880.5V385.5H882.5V437.5H884.5V385.5H886.5V437.5H888.5V385.5H890.5V437.5H893.5V385.5H895.5V437.5H897.5V385.5H898.5V437.5H900.5V385.5H902.5V437.5H904.5V385.5H907.5V437.5H909.5V385.5H911.5V437.5H913.5V385.5H915.5V437.5H917.5V385.5H919.5V437.5H922.5V385.5H924.5V437.5H926.5V385.5H928.5V437.5H930.5V385.5H932.5V437.5H933.5V385.5H935.5V437.5H938.5V385.5H940.5V437.5H942.5V385.5H944.5V437.5H946.5V385.5H948.5V437.5H950.5V385.5H953.5V437.5H955.5V385.5H957.5V437.5H959.5V385.5H961.5V437.5H963.5V385.5H965.5V437.5H968.5V385.5H969.5V437.5H971.5V385.5H973.5V437.5H975.5V385.5H977.5V437.5H979.5V385.5H981.5V437.5H984.5V385.5H986.5V437.5H988.5V385.5H990.5V437.5H992.5V385.5H994"/>
<path d="M232.5 385V438"/>
</g>
<rect x="287.5" y="166.5" width="29" height="15" rx="6.3" ry="6.3" fill="url(#gPill)" fill-opacity="0.86" stroke="#a9591a" stroke-width="1.2"/>
<rect x="287.5" y="235.5" width="29" height="15" rx="6.3" ry="6.3" fill="url(#gPill)" fill-opacity="0.86" stroke="#050506" stroke-width="1.2"/>
<rect x="319.5" y="166.5" width="28" height="15" rx="6.3" ry="6.3" fill="url(#gPill)" fill-opacity="0.86" stroke="#a9591a" stroke-width="1.2"/>
<rect x="319.5" y="235.5" width="28" height="15" rx="6.3" ry="6.3" fill="url(#gPill)" fill-opacity="0.86" stroke="#050506" stroke-width="1.2"/>
<rect x="349.5" y="166.5" width="30" height="15" rx="6.3" ry="6.3" fill="url(#gPill)" fill-opacity="0.86" stroke="#a9591a" stroke-width="1.2"/>
<rect x="349.5" y="235.5" width="30" height="15" rx="6.3" ry="6.3" fill="url(#gPill)" fill-opacity="0.86" stroke="#050506" stroke-width="1.2"/>
<rect x="814.5" y="166.5" width="30" height="15" rx="6.3" ry="6.3" fill="url(#gPill)" fill-opacity="0.86" stroke="#a9591a" stroke-width="1.2"/>
<rect x="814.5" y="235.5" width="30" height="15" rx="6.3" ry="6.3" fill="url(#gPill)" fill-opacity="0.86" stroke="#050506" stroke-width="1.2"/>
<rect x="846.5" y="166.5" width="28" height="15" rx="6.3" ry="6.3" fill="url(#gPill)" fill-opacity="0.86" stroke="#a9591a" stroke-width="1.2"/>
<rect x="846.5" y="235.5" width="28" height="15" rx="6.3" ry="6.3" fill="url(#gPill)" fill-opacity="0.86" stroke="#050506" stroke-width="1.2"/>
<rect x="877.5" y="166.5" width="29" height="15" rx="6.3" ry="6.3" fill="url(#gPill)" fill-opacity="0.86" stroke="#a9591a" stroke-width="1.2"/>
<rect x="877.5" y="235.5" width="29" height="15" rx="6.3" ry="6.3" fill="url(#gPill)" fill-opacity="0.86" stroke="#050506" stroke-width="1.2"/>
<path d="M278.5 120V652" stroke="#6acb3b" stroke-width="1.3" stroke-dasharray="12 12" fill="none"/>
<path d="M278 100L298 112L278 124Z" fill="#6acb3b"/>
<path d="M281.2 104.6L292.8 112L281.2 119.4Z" fill="#000"/>
<text x="282.10" y="116" font-size="11.3" fill="#fff" stroke="#fff" stroke-width="0.35">1</text>
<path d="M418.5 120V652" stroke="#6acb3b" stroke-width="1.3" stroke-dasharray="12 12" fill="none"/>
<path d="M418 100L438 112L418 124Z" fill="#6acb3b"/>
<path d="M421.2 104.6L432.8 112L421.2 119.4Z" fill="#000"/>
<text x="422.10" y="116" font-size="11.3" fill="#fff" stroke="#fff" stroke-width="0.35">2</text>
<path d="M541.6 475.2V489L544.8 486.1L547.3 491.7L549.4 490.8L547 485.3H551.4Z" fill="#fff" stroke="#000" stroke-width="0.9"/>
</g>
<path d="M1005.7 114H1015.1L1010.4 119.1Z" fill="#f2f2f2"/>
<text x="1018.51" y="122" font-size="12.5" fill="#f2f2f2" textLength="89.11" lengthAdjust="spacing" >Measurements</text>
<rect x="1180.8" y="110.7" width="22.5" height="14" rx="2.2" fill="#000"/>
<rect x="1181.3999999999999" y="111.3" width="21.3" height="12.6" rx="2" fill="url(#gDark)"/>
<path d="M1194.07 116.17L1194.07 118.43L1192.21 118.51L1192.13 118.72L1193.39 120.09L1191.79 121.69L1190.42 120.43L1190.21 120.51L1190.13 122.37L1187.87 122.37L1187.79 120.51L1187.58 120.43L1186.21 121.69L1184.61 120.09L1185.87 118.72L1185.79 118.51L1183.93 118.43L1183.93 116.17L1185.79 116.09L1185.87 115.88L1184.61 114.51L1186.21 112.91L1187.58 114.17L1187.79 114.09L1187.87 112.23L1190.13 112.23L1190.21 114.09L1190.42 114.17L1191.79 112.91L1193.39 114.51L1192.13 115.88L1192.21 116.09Z" fill="#fff"/>
<circle cx="1189" cy="117.3" r="1.25" fill="#1a1a1c"/>
<path d="M1195.8 116.2H1201.2L1198.5 119.2Z" fill="#f2f2f2"/>
<text x="1004.18" y="157" font-size="12.5" fill="#f2f2f2" textLength="40.23" lengthAdjust="spacing" >Width:</text>
<text x="1079.93" y="157" font-size="12.5" fill="#f2f2f2" textLength="70.11" lengthAdjust="spacing" >15.6667 µs</text>
<text x="1003.80" y="172" font-size="12.5" fill="#f2f2f2" textLength="41.60" lengthAdjust="spacing" >Period:</text>
<text x="1079.79" y="172" font-size="12.5" fill="#f2f2f2" textLength="70.25" lengthAdjust="spacing" >21.6667 µs</text>
<text x="1003.80" y="187" font-size="12.5" fill="#f2f2f2" textLength="66.67" lengthAdjust="spacing" >Frequency:</text>
<text x="1079.93" y="187" font-size="12.5" fill="#f2f2f2" textLength="78.60" lengthAdjust="spacing" >46.1538 kHz</text>
<text x="1003.85" y="202" font-size="12.5" fill="#f2f2f2" textLength="19.60" lengthAdjust="spacing" >T1:</text>
<text x="1079.93" y="202" font-size="12.5" fill="#f2f2f2" textLength="114.88" lengthAdjust="spacing" >10.098125000 ms</text>
<text x="1003.70" y="217" font-size="12.5" fill="#f2f2f2" textLength="19.75" lengthAdjust="spacing" >T2:</text>
<text x="1079.98" y="217" font-size="12.5" fill="#f2f2f2" textLength="114.83" lengthAdjust="spacing" >10.104125000 ms</text>
<text x="1003.82" y="232" font-size="12.5" fill="#f2f2f2" textLength="72.08" lengthAdjust="spacing" >| T1 - T2 | =</text>
<text x="1079.68" y="232" font-size="12.5" fill="#f2f2f2" textLength="62.64" lengthAdjust="spacing" >6.0000 µs</text>
<rect x="1004" y="204" width="15" height="1" fill="#f2f2f2" />
<rect x="1004" y="219" width="15" height="1" fill="#f2f2f2" />
<path d="M995 245.5H1097.5L1103 251L1108.5 245.5H1214" fill="none" stroke="#54565c" stroke-width="1"/>
<path d="M1005.7 259H1015.1L1010.4 264.1Z" fill="#f2f2f2"/>
<text x="1019.33" y="267" font-size="12.5" fill="#f2f2f2" textLength="57.06" lengthAdjust="spacing" >Analyzers</text>
<rect x="1180.8" y="255.7" width="22.5" height="14" rx="2.2" fill="#000"/>
<rect x="1181.3999999999999" y="256.3" width="21.3" height="12.6" rx="2" fill="url(#gDark)"/>
<path d="M1185.1 262.1H1193.1M1189.1 258.1V266.1" stroke="#f2f2f2" stroke-width="2.3"/>
<path d="M1195.8 261.2H1201.2L1198.5 264.2Z" fill="#f2f2f2"/>
<path d="M995 280.5H1214" stroke="#4a4c52" stroke-width="1" stroke-dasharray="1 2"/>
<path d="M995 315.5H1214" stroke="#4a4c52" stroke-width="1" stroke-dasharray="1 2"/>
<text x="1019.09" y="302" font-size="12.5" fill="#f2f2f2" textLength="20.13" lengthAdjust="spacing" >SPI</text>
<rect x="1169.8" y="290.8" width="13.4" height="13.6" rx="2.2" fill="#000"/>
<rect x="1170.3999999999999" y="291.40000000000003" width="12.200000000000001" height="12.2" rx="2" fill="url(#gDark)"/>
<path d="M1173.9 295.0L1179.1 300.2M1179.1 295.0L1173.9 300.2" stroke="#fff" stroke-width="1.1"/>
<rect x="1186.9" y="290.8" width="16.4" height="13.6" rx="2.2" fill="#000"/>
<rect x="1187.5" y="291.40000000000003" width="15.2" height="12.2" rx="2" fill="url(#gDark)"/>
<path d="M1199.98 295.99L1199.98 298.21L1198.15 298.29L1198.07 298.49L1199.31 299.83L1197.73 301.41L1196.39 300.17L1196.19 300.25L1196.11 302.08L1193.89 302.08L1193.81 300.25L1193.61 300.17L1192.27 301.41L1190.69 299.83L1191.93 298.49L1191.85 298.29L1190.02 298.21L1190.02 295.99L1191.85 295.91L1191.93 295.71L1190.69 294.37L1192.27 292.79L1193.61 294.03L1193.81 293.95L1193.89 292.12L1196.11 292.12L1196.19 293.95L1196.39 294.03L1197.73 292.79L1199.31 294.37L1198.07 295.71L1198.15 295.91Z" fill="#fff"/>
<circle cx="1195" cy="297.1" r="1.22" fill="#1a1a1c"/>
<text x="1018.58" y="337" font-size="12.5" fill="#f2f2f2" textLength="21.65" lengthAdjust="spacing" >I2C</text>
<rect x="1169.8" y="325.8" width="13.4" height="13.6" rx="2.2" fill="#000"/>
<rect x="1170.3999999999999" y="326.40000000000003" width="12.200000000000001" height="12.2" rx="2" fill="url(#gDark)"/>
<path d="M1173.9 330.0L1179.1 335.2M1179.1 330.0L1173.9 335.2" stroke="#fff" stroke-width="1.1"/>
<rect x="1186.9" y="325.8" width="16.4" height="13.6" rx="2.2" fill="#000"/>
<rect x="1187.5" y="326.40000000000003" width="15.2" height="12.2" rx="2" fill="url(#gDark)"/>
<path d="M1199.98 330.99L1199.98 333.21L1198.15 333.29L1198.07 333.49L1199.31 334.83L1197.73 336.41L1196.39 335.17L1196.19 335.25L1196.11 337.08L1193.89 337.08L1193.81 335.25L1193.61 335.17L1192.27 336.41L1190.69 334.83L1191.93 333.49L1191.85 333.29L1190.02 333.21L1190.02 330.99L1191.85 330.91L1191.93 330.71L1190.69 329.37L1192.27 327.79L1193.61 329.03L1193.81 328.95L1193.89 327.12L1196.11 327.12L1196.19 328.95L1196.39 329.03L1197.73 327.79L1199.31 329.37L1198.07 330.71L1198.15 330.91Z" fill="#fff"/>
<circle cx="1195" cy="332.1" r="1.22" fill="#1a1a1c"/>
<rect x="1" y="653" width="1213" height="16" fill="#eeeae3" />
<rect x="1" y="653" width="1213" height="1" fill="#fffdf2" />
<rect x="1" y="668" width="1213" height="1" fill="#fbfbfb" />
<rect x="20.5" y="653.5" width="1173.5" height="15" rx="5.5" fill="url(#gScroll)" stroke="url(#gTrackS)" stroke-width="1"/>
<path d="M13.2 658.4V664.2L8 661.3Z" fill="#6a6862"/>
<path d="M1201.8 658.4V664.2L1207 661.3Z" fill="#6a6862"/>
<circle cx="119.4" cy="661.2" r="8.1" fill="url(#gThumb)" stroke="#bfae8e" stroke-width="0.9"/>
<rect x="1" y="669" width="1213" height="27" fill="#d4d0c8" />
<rect x="1" y="669" width="1213" height="1" fill="#a3a09a" />
<path d="M52 669.5H92V689Q92 694.3 86 694.3H58Q52 694.3 52 689Z" fill="#f0f0f0" stroke="#9c9a95" stroke-width="0.8"/>
<path d="M85 669.5H272Q268.8 670.6 267.8 675L264.6 689Q263.4 694.3 258.4 694.3H90C83 693.4 79.7 688 79.5 682C79.4 677 81 672 85 669.5Z" fill="#b1b1b1" stroke="#8b8986" stroke-width="0.8"/>
<path d="M14 669.5Q19.6 670.4 20.8 675L24.6 689Q26 694.3 31 694.3H53.6Q58.6 694.3 59.8 689L63.4 675Q64.5 670.4 69 669.5Z" fill="#f1f1f1" stroke="#a3a09a" stroke-width="0.8"/>
<rect x="18.5" y="668" width="47" height="2.2" fill="#f1f1f1" />
<circle cx="41.6" cy="679.8" r="4.3" fill="none" stroke="#3c3c3c" stroke-width="2.4"/>
<path d="M45 683.2L49.6 687.8" stroke="#3c3c3c" stroke-width="3.2" stroke-linecap="round"/>
<path d="M69.6 678.6L74 682.6L69.6 686.6" fill="none" stroke="#505050" stroke-width="2"/>
<text x="92.47" y="687" font-size="13.3" fill="#6a6a6a" textLength="18.03" lengthAdjust="spacing" >I/O</text>
<path d="M250.3 680.2L253.5 683.4L256.7 680.2" fill="none" stroke="#4a4a4a" stroke-width="1.6"/>
</svg></body></html>
